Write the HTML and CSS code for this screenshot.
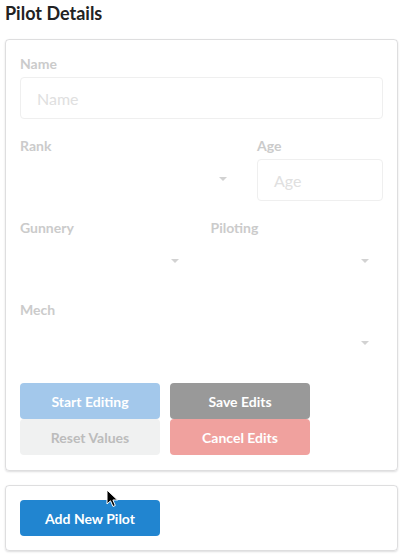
FILE: index.html
```html
<!DOCTYPE html>
<html>
<head>
<meta charset="utf-8">
<link rel="stylesheet" href="styles.css">
</head>
<body>
<h3 class="title">Pilot Details</h3>
<div class="card">
  <div class="form">
    <div class="field">
      <label class="label">Name</label>
      <div class="input"><span class="ph">Name</span></div>
    </div>
    <div class="row row-a">
      <div class="field">
        <label class="label">Rank</label>
        <div class="select"><span class="caret"></span></div>
      </div>
      <div class="field">
        <label class="label">Age</label>
        <div class="input"><span class="ph">Age</span></div>
      </div>
    </div>
    <div class="row row-b">
      <div class="field">
        <label class="label">Gunnery</label>
        <div class="select"><span class="caret"></span></div>
      </div>
      <div class="field">
        <label class="label">Piloting</label>
        <div class="select"><span class="caret"></span></div>
      </div>
    </div>
    <div class="field">
      <label class="label">Mech</label>
      <div class="select"><span class="caret"></span></div>
    </div>
  </div>
  <div class="buttons">
    <button class="btn btn-blue-faded">Start Editing</button>
    <button class="btn btn-grey">Save Edits</button>
    <button class="btn btn-light">Reset Values</button>
    <button class="btn btn-red-faded">Cancel Edits</button>
  </div>
</div>
<div class="card card-2">
  <button class="btn btn-blue">Add New Pilot</button>
</div>
<svg class="cursor" width="13" height="19" viewBox="0 0 13 19">
  <path d="M1 1 L1 15 L4.5 11.8 L7 17.5 L9.3 16.5 L6.9 11 L11.5 11 Z" fill="#000" stroke="#fff" stroke-width="1" stroke-linejoin="round"/>
</svg>
</body>
</html>
```

FILE: styles.css
```css
html, body {
  margin: 0;
  padding: 0;
  background: #fff;
}
body {
  padding: 2px 5px 0 5px;
  font-family: Lato, "Noto Sans", sans-serif;
  color: rgba(0, 0, 0, 0.87);
  position: relative;
  width: 395px;
}
.title {
  margin: 0 0 14px 0;
  font-size: 18px;
  line-height: 23px;
  font-weight: 700;
  color: #222;
}
.card {
  border: 1px solid rgba(34, 36, 38, 0.15);
  border-radius: 4px;
  box-shadow: 0 1px 2px 0 rgba(34, 36, 38, 0.15);
  padding: 15px 14px 15px 14px;
  width: 363px;
  margin-bottom: 14px;
}
.card-2 {
  padding: 14px 14px 14px 14px;
}
.form {
  display: flex;
  flex-direction: column;
  gap: 18px;
}
.row {
  display: grid;
}
.row-a {
  grid-template-columns: 1fr 126px;
  column-gap: 16px;
}
.row-b {
  grid-template-columns: 1fr 1fr;
  column-gap: 18px;
}
.field {
  display: flex;
  flex-direction: column;
}
.label {
  font-size: 14px;
  line-height: 18px;
  font-weight: 700;
  color: #cbcbcb;
  margin-bottom: 4px;
}
.input {
  height: 40px;
  border: 1px solid #efefef;
  border-radius: 4px;
  display: flex;
  align-items: center;
  padding: 0 16px;
}
.ph {
  font-size: 16px;
  color: #e0e0e0;
}
.select {
  height: 42px;
  display: flex;
  align-items: center;
  justify-content: flex-end;
  padding-right: 14px;
}
.caret {
  width: 0;
  height: 0;
  border-left: 4px solid transparent;
  border-right: 4px solid transparent;
  border-top: 4px solid #d2d2d2;
  margin-bottom: 3px;
}
.buttons {
  display: grid;
  grid-template-columns: 140px 140px;
  column-gap: 10px;
  row-gap: 0;
  margin-top: 18px;
}
.btn {
  height: 36px;
  border: none;
  border-radius: 4px;
  font-family: Lato, "Noto Sans", sans-serif;
  font-size: 14px;
  font-weight: 700;
  padding: 0;
  width: 140px;
  color: #fff;
  display: block;
}
.btn-blue-faded { background: #a3c8eb; }
.btn-grey { background: #999999; }
.btn-light { background: #f0f1f1; color: #bcbcbc; }
.btn-red-faded { background: #f0a19e; }
.btn-blue { background: #2185d0; }
.cursor {
  position: absolute;
  left: 106px;
  top: 489px;
}
```
